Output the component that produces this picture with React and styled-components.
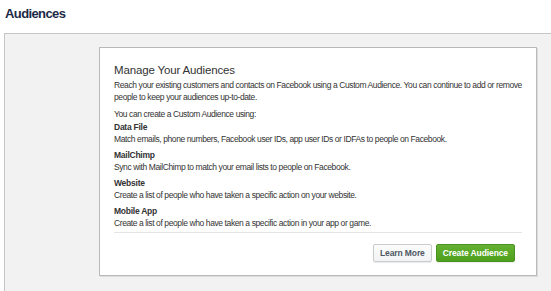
import React from "react";
import styled, { createGlobalStyle } from "styled-components";

const Global = createGlobalStyle`
  html, body {
    margin: 0;
    padding: 0;
    background: #fff;
  }
  body {
    width: 551px;
    height: 291px;
    overflow: hidden;
    font-family: "Liberation Sans", Arial, sans-serif;
  }
`;

const items = [
  {
    title: "Data File",
    text: "Match emails, phone numbers, Facebook user IDs, app user IDs or IDFAs to people on Facebook.",
  },
  {
    title: "MailChimp",
    text: "Sync with MailChimp to match your email lists to people on Facebook.",
  },
  {
    title: "Website",
    text: "Create a list of people who have taken a specific action on your website.",
  },
  {
    title: "Mobile App",
    text: "Create a list of people who have taken a specific action in your app or game.",
  },
];

function App() {
  return (
    <Page>
      <Global />
      <Heading>Audiences</Heading>
      <Panel>
        <Card>
          <Title>Manage Your Audiences</Title>
          <Para $nowrap>
            Reach your existing customers and contacts on Facebook using a Custom Audience. You can
            continue to add or remove
            <br />
            people to keep your audiences up-to-date.
          </Para>
          <Para $top={5}>You can create a Custom Audience using:</Para>
          <List>
            {items.map((item) => (
              <Item key={item.title}>
                <ItemTitle>{item.title}</ItemTitle>
                <Para>{item.text}</Para>
              </Item>
            ))}
          </List>
          <Divider />
          <Actions>
            <Button>Learn More</Button>
            <Button $primary>Create Audience</Button>
          </Actions>
        </Card>
      </Panel>
    </Page>
  );
}

const Page = styled.div`
  display: flex;
  flex-direction: column;
  width: 551px;
  height: 291px;
`;

const Heading = styled.h1`
  margin: 0;
  padding: 6px 0 0 5px;
  height: 27px;
  box-sizing: border-box;
  font-size: 13px;
  letter-spacing: -0.6px;
  line-height: 16px;
  font-weight: bold;
  color: #1c2a47;
`;

const Panel = styled.div`
  flex: 1;
  margin: 6px 0 0 4px;
  background: #f2f2f2;
  border: 1px solid #c6c6c6;
  border-right: none;
  border-bottom: none;
  padding: 13px 0 0 94px;
`;

const Card = styled.div`
  box-sizing: border-box;
  width: 438px;
  background: #fff;
  border: 1px solid #b9b9b9;
  box-shadow: 1px 1px 0 #dcdcdc;
  padding: 14px 14px 13px;
  color: #333;
`;

const Title = styled.h2`
  margin: 0 0 1px;
  font-size: 11.5px;
  letter-spacing: -0.15px;
  line-height: 16px;
  font-weight: normal;
  color: #333;
`;

const Para = styled.p`
  margin: ${(p) => p.$top || 0}px 0 0;
  font-size: 8.5px;
  letter-spacing: -0.4px;
  line-height: 12px;
  color: #333;
  white-space: ${(p) => (p.$nowrap ? "nowrap" : "normal")};
`;

const List = styled.div`
  display: flex;
  flex-direction: column;
  gap: 4px;
  margin-top: 1px;
`;

const Item = styled.div``;

const ItemTitle = styled.div`
  font-size: 8.5px;
  letter-spacing: -0.25px;
  line-height: 12px;
  font-weight: bold;
  color: #333;
`;

const Divider = styled.div`
  margin-top: 3px;
  height: 1px;
  background: #e5e5e5;
`;

const Actions = styled.div`
  display: flex;
  justify-content: flex-end;
  gap: 4px;
  margin-top: 11px;
  padding-right: 7px;
`;

const Button = styled.button`
  box-sizing: border-box;
  height: 18px;
  padding: 0 6px;
  font-family: "Liberation Sans", Arial, sans-serif;
  font-size: 8.5px;
  letter-spacing: -0.1px;
  font-weight: bold;
  border-radius: 2px;
  cursor: pointer;
  border: 1px solid ${(p) => (p.$primary ? "#4a9320" : "#cacbcd")};
  color: ${(p) => (p.$primary ? "#fff" : "#4e5665")};
  background: ${(p) =>
    p.$primary
      ? "linear-gradient(#65b133, #4e9f1c)"
      : "linear-gradient(#fbfbfb, #f2f3f4)"};
  box-shadow: 0 1px 1px rgba(0, 0, 0, 0.08);
`;

export default App;
